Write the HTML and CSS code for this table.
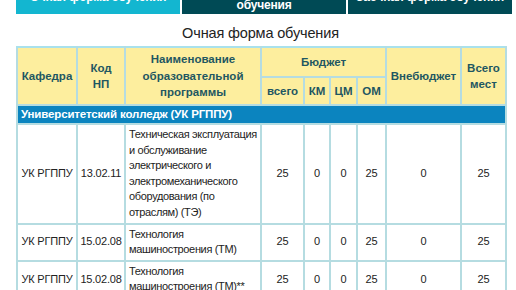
FILE: index.html
```html
<!DOCTYPE html>
<html lang="ru">
<head>
<meta charset="utf-8">
<link rel="stylesheet" href="styles.css">
</head>
<body>
<div class="page">
  <div class="tabs">
    <div class="tab tab-active">Очная форма обучения</div>
    <div class="tab">Очно-заочная форма<br>обучения</div>
    <div class="tab">Заочная форма обучения</div>
  </div>
  <h2 class="title">Очная форма обучения</h2>
  <table class="plan">
    <colgroup>
      <col class="c-kaf"><col class="c-code"><col class="c-name"><col class="c-all"><col class="c-km"><col class="c-cm"><col class="c-om"><col class="c-extra"><col class="c-total">
    </colgroup>
    <thead>
      <tr class="h1">
        <th rowspan="2">Кафедра</th>
        <th rowspan="2">Код<br>НП</th>
        <th rowspan="2">Наименование образовательной программы</th>
        <th colspan="4">Бюджет</th>
        <th rowspan="2">Внебюджет</th>
        <th rowspan="2">Всего<br>мест</th>
      </tr>
      <tr class="h2">
        <th>всего</th><th>КМ</th><th>ЦМ</th><th>ОМ</th>
      </tr>
    </thead>
    <tbody>
      <tr class="section"><td colspan="9">Университетский колледж (УК РГППУ)</td></tr>
      <tr>
        <td class="nw">УК РГППУ</td><td class="nw">13.02.11</td>
        <td class="name">Техническая эксплуатация<br>и обслуживание<br>электрического и<br>электромеханического<br>оборудования (по<br>отраслям) (ТЭ)</td>
        <td>25</td><td>0</td><td>0</td><td>25</td><td>0</td><td>25</td>
      </tr>
      <tr>
        <td class="nw">УК РГППУ</td><td class="nw">15.02.08</td>
        <td class="name">Технология<br>машиностроения (ТМ)</td>
        <td>25</td><td>0</td><td>0</td><td>25</td><td>0</td><td>25</td>
      </tr>
      <tr>
        <td class="nw">УК РГППУ</td><td class="nw">15.02.08</td>
        <td class="name">Технология<br>машиностроения (ТМ)**</td>
        <td>25</td><td>0</td><td>0</td><td>25</td><td>0</td><td>25</td>
      </tr>
    </tbody>
  </table>
</div>
</body>
</html>
```
FILE: styles.css
```css
html, body {
  margin: 0;
  padding: 0;
  background: #ffffff;
  font-family: "Liberation Sans", Arial, sans-serif;
  color: #222222;
}

.page {
  padding-left: 16px;
  width: 496px;
}

.tabs {
  display: flex;
  gap: 2px;
  margin-top: -20px;
  height: 34px;
}

.tab {
  flex: 1;
  display: flex;
  align-items: center;
  justify-content: center;
  text-align: center;
  white-space: nowrap;
  background: #004a55;
  color: #ffffff;
  font-weight: bold;
  font-size: 12px;
  letter-spacing: -0.2px;
  line-height: 16px;
}

.tab-active {
  background: #13b6d0;
}

.title {
  margin: 10px 0 4px;
  width: 489px;
  text-align: center;
  font-weight: normal;
  font-size: 14.5px;
  letter-spacing: -0.15px;
  line-height: 18px;
  color: #222222;
}

.plan {
  border-collapse: collapse;
  table-layout: fixed;
  width: 489px;
  font-size: 11px;
}

.c-kaf { width: 60px; }
.c-code { width: 48px; }
.c-name { width: 136px; }
.c-all { width: 43px; }
.c-km { width: 26px; }
.c-cm { width: 27px; }
.c-om { width: 29px; }
.c-extra { width: 75px; }
.c-total { width: 45px; }

.plan th,
.plan td {
  border: 2px solid #b5dce1;
  padding: 2px 1px;
  text-align: center;
  vertical-align: middle;
}

.plan th {
  background: #fdee9e;
  color: #1f5762;
  font-weight: bold;
  font-size: 11.5px;
  line-height: 16.5px;
}

.plan thead tr.h1 th {
  border-top-color: #a9e1ec;
}

.plan tr.h1 th[colspan] {
  height: 24px;
}

.plan tr.h2 th {
  height: 22px;
}

.plan td {
  line-height: 15.6px;
  letter-spacing: -0.2px;
  color: #222222;
}

.plan td.nw {
  white-space: nowrap;
}

.plan td.name {
  text-align: left;
  white-space: nowrap;
  letter-spacing: -0.35px;
  padding-left: 3px;
  padding-right: 0;
}

.plan tr.section td {
  background: #0b84bf;
  color: #ffffff;
  font-weight: bold;
  font-size: 11.5px;
  text-align: left;
  padding: 1px 3px;
  letter-spacing: -0.15px;
  line-height: 15px;
}
```
